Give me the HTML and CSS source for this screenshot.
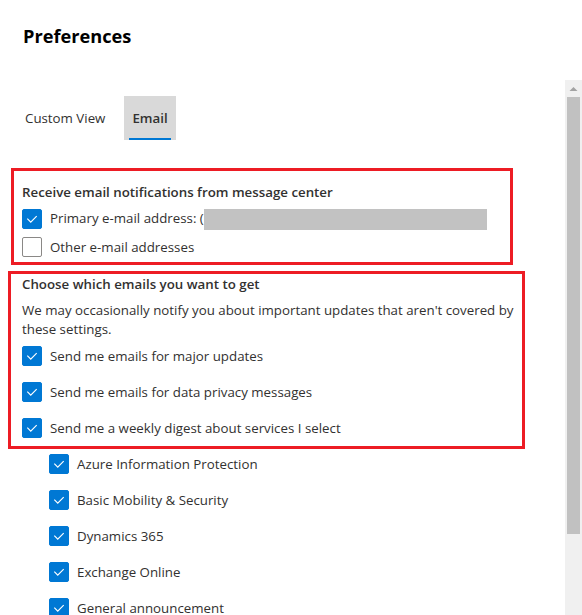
FILE: index.html
```html
<!DOCTYPE html>
<html lang="en">
<head>
<meta charset="utf-8">
<title>Preferences</title>
<link rel="stylesheet" href="styles.css">
</head>
<body>
<div class="panel">
  <h1 class="title">Preferences</h1>
  <div class="pane">
    <div class="content">
      <div class="tabs">
        <button class="tab">Custom View</button>
        <button class="tab tab-active">Email</button>
      </div>

      <section class="box box-one">
        <h2 class="heading">Receive email notifications from message center</h2>
        <div class="rows rows-tight">
          <label class="row">
            <span class="check checked"><svg viewBox="0 0 20 20"><path d="M4.8 9.6 L8.6 13.4 L15.2 6.8"/></svg></span>
            <span class="label">Primary e-mail address: (<span class="redact"></span></span>
          </label>
          <label class="row">
            <span class="check"></span>
            <span class="label">Other e-mail addresses</span>
          </label>
        </div>
      </section>

      <section class="box box-two">
        <h2 class="heading">Choose which emails you want to get</h2>
        <p class="desc">We may occasionally notify you about important updates that aren't covered by these settings.</p>
        <div class="rows">
          <label class="row">
            <span class="check checked"><svg viewBox="0 0 20 20"><path d="M4.8 9.6 L8.6 13.4 L15.2 6.8"/></svg></span>
            <span class="label">Send me emails for major updates</span>
          </label>
          <label class="row">
            <span class="check checked"><svg viewBox="0 0 20 20"><path d="M4.8 9.6 L8.6 13.4 L15.2 6.8"/></svg></span>
            <span class="label">Send me emails for data privacy messages</span>
          </label>
          <label class="row">
            <span class="check checked"><svg viewBox="0 0 20 20"><path d="M4.8 9.6 L8.6 13.4 L15.2 6.8"/></svg></span>
            <span class="label">Send me a weekly digest about services I select</span>
          </label>
        </div>
      </section>

      <div class="rows services">
        <label class="row">
          <span class="check checked"><svg viewBox="0 0 20 20"><path d="M4.8 9.6 L8.6 13.4 L15.2 6.8"/></svg></span>
          <span class="label">Azure Information Protection</span>
        </label>
        <label class="row">
          <span class="check checked"><svg viewBox="0 0 20 20"><path d="M4.8 9.6 L8.6 13.4 L15.2 6.8"/></svg></span>
          <span class="label">Basic Mobility &amp; Security</span>
        </label>
        <label class="row">
          <span class="check checked"><svg viewBox="0 0 20 20"><path d="M4.8 9.6 L8.6 13.4 L15.2 6.8"/></svg></span>
          <span class="label">Dynamics 365</span>
        </label>
        <label class="row">
          <span class="check checked"><svg viewBox="0 0 20 20"><path d="M4.8 9.6 L8.6 13.4 L15.2 6.8"/></svg></span>
          <span class="label">Exchange Online</span>
        </label>
        <label class="row">
          <span class="check checked"><svg viewBox="0 0 20 20"><path d="M4.8 9.6 L8.6 13.4 L15.2 6.8"/></svg></span>
          <span class="label">General announcement</span>
        </label>
      </div>
    </div>

    <div class="scrollbar">
      <div class="sb-button"><svg viewBox="0 0 17 17"><path d="M4.5 11 L8.5 7 L12.5 11 Z"/></svg></div>
      <div class="sb-thumb"></div>
    </div>
  </div>
</div>
</body>
</html>
```

FILE: styles.css
```css
html, body {
  margin: 0;
  padding: 0;
  background: #ffffff;
}

body {
  width: 582px;
  height: 615px;
  overflow: hidden;
  font-family: "Open Sans", "Noto Sans", "Liberation Sans", sans-serif;
  font-size: 13.3px;
  color: #323130;
}

.panel {
  display: flex;
  flex-direction: column;
  height: 615px;
}

.title {
  margin: 22px 0 30px 23px;
  font-size: 18.2px;
  line-height: 28px;
  font-weight: 700;
  color: #000000;
}

.pane {
  flex: 1;
  display: flex;
  min-height: 0;
}

.content {
  flex: 1;
  min-width: 0;
  padding-top: 16px;
}

/* Tabs */
.tabs {
  display: flex;
  gap: 11px;
  margin-left: 17px;
}

.tab {
  position: relative;
  height: 44px;
  padding: 0 8px;
  border: 0;
  background: transparent;
  font-family: inherit;
  font-size: 13.3px;
  color: #323130;
  cursor: pointer;
}

.tab-active {
  background: #d9d9d9;
  font-weight: 600;
}

.tab-active::after {
  content: "";
  position: absolute;
  left: 5px;
  right: 5px;
  bottom: 0;
  height: 2px;
  background: #0078d4;
}

/* Annotated boxes */
.box {
  border: 3px solid #ed1c24;
  box-sizing: border-box;
}

.box-one {
  width: 502px;
  margin: 28px 0 0 11px;
  padding: 11px 0 5px 8px;
}

.box-two {
  width: 517px;
  margin: 6px 0 0 8px;
  padding: 0 4px 8px 11px;
}

.heading {
  margin: 0;
  font-size: 13.3px;
  line-height: 20px;
  font-weight: 600;
  color: #323130;
}

.desc {
  margin: 7px 0 7px 0;
  line-height: 19px;
}

.rows {
  display: flex;
  flex-direction: column;
  gap: 16px;
}

.rows-tight {
  gap: 8px;
  margin-top: 7px;
}

.services {
  margin: 5px 0 0 49px;
}

.row {
  display: flex;
  align-items: center;
  gap: 8px;
  height: 20px;
  line-height: 20px;
  white-space: nowrap;
}

.check {
  flex: none;
  width: 20px;
  height: 20px;
  box-sizing: border-box;
  border: 1px solid #8a8886;
  border-radius: 2px;
  background: #ffffff;
}

.check.checked {
  border-color: #0078d4;
  background: #0078d4;
}

.check svg {
  display: block;
  width: 18px;
  height: 18px;
}

.check svg path {
  fill: none;
  stroke: #ffffff;
  stroke-width: 1.3;
}

.redact {
  display: inline-block;
  width: 283px;
  height: 21px;
  vertical-align: middle;
  background: #c2c2c2;
}

/* Scrollbar */
.scrollbar {
  flex: none;
  width: 17px;
  background: #f0f0f0;
  display: flex;
  flex-direction: column;
  align-items: center;
}

.sb-button {
  width: 17px;
  height: 17px;
}

.sb-button svg {
  display: block;
  width: 17px;
  height: 17px;
  fill: #a3a3a3;
}

.sb-thumb {
  width: 13px;
  height: 437px;
  background: #c1c1c1;
}
```
